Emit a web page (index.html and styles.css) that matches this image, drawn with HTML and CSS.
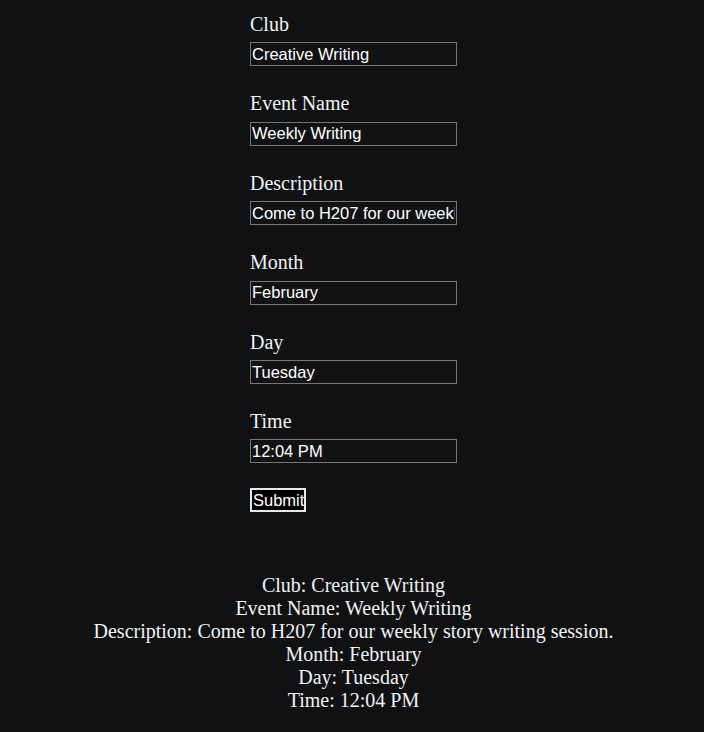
FILE: index.html
```html
<!DOCTYPE html>
<html>
<head>
<meta charset="utf-8">
<link rel="stylesheet" href="styles.css">
</head>
<body>
<main class="page">
  <form class="event-form">
    <label class="field-label">Club</label>
    <input class="field-input" type="text" value="Creative Writing">
    <label class="field-label">Event Name</label>
    <input class="field-input" type="text" value="Weekly Writing">
    <label class="field-label">Description</label>
    <input class="field-input" type="text" value="Come to H207 for our weekly story writing session.">
    <label class="field-label">Month</label>
    <input class="field-input" type="text" value="February">
    <label class="field-label">Day</label>
    <input class="field-input" type="text" value="Tuesday">
    <label class="field-label">Time</label>
    <input class="field-input field-last" type="text" value="12:04 PM">
    <button class="submit-btn" type="button">Submit</button>
  </form>
  <section class="summary">
    <div>Club: Creative Writing</div>
    <div>Event Name: Weekly Writing</div>
    <div>Description: Come to H207 for our weekly story writing session.</div>
    <div>Month: February</div>
    <div>Day: Tuesday</div>
    <div>Time: 12:04 PM</div>
  </section>
</main>
</body>
</html>
```

FILE: styles.css
```css
html, body {
  margin: 0;
  padding: 0;
  background: #0f1113;
  color: #f2f2f2;
  font-family: "Liberation Serif", "Times New Roman", serif;
}
.page {
  padding: 13px 0 0 3px;
  display: flex;
  flex-direction: column;
  align-items: center;
}
.event-form {
  width: 207px;
  display: flex;
  flex-direction: column;
  align-items: flex-start;
}
.field-label {
  font-size: 20px;
  line-height: 22.4px;
  color: #f2f2f2;
}
.field-input {
  box-sizing: border-box;
  width: 207px;
  height: 24px;
  margin: 7px 0 26px 0;
  padding: 1px 1px;
  border: 1px solid #767676;
  background: #111213;
  color: #ffffff;
  font-family: "Liberation Sans", Arial, sans-serif;
  font-size: 16.5px;
  outline: none;
}
.field-last {
  margin-bottom: 25px;
}
.submit-btn {
  box-sizing: border-box;
  height: 24px;
  width: 56px;
  padding: 0 1px;
  border: 2px solid #e8e8e8;
  background: #000000;
  color: #ffffff;
  font-family: "Liberation Sans", Arial, sans-serif;
  font-size: 16.5px;
  line-height: 18px;
}
.summary {
  margin-top: 62px;
  text-align: center;
  font-size: 20px;
  line-height: 23px;
  color: #f2f2f2;
}
```
